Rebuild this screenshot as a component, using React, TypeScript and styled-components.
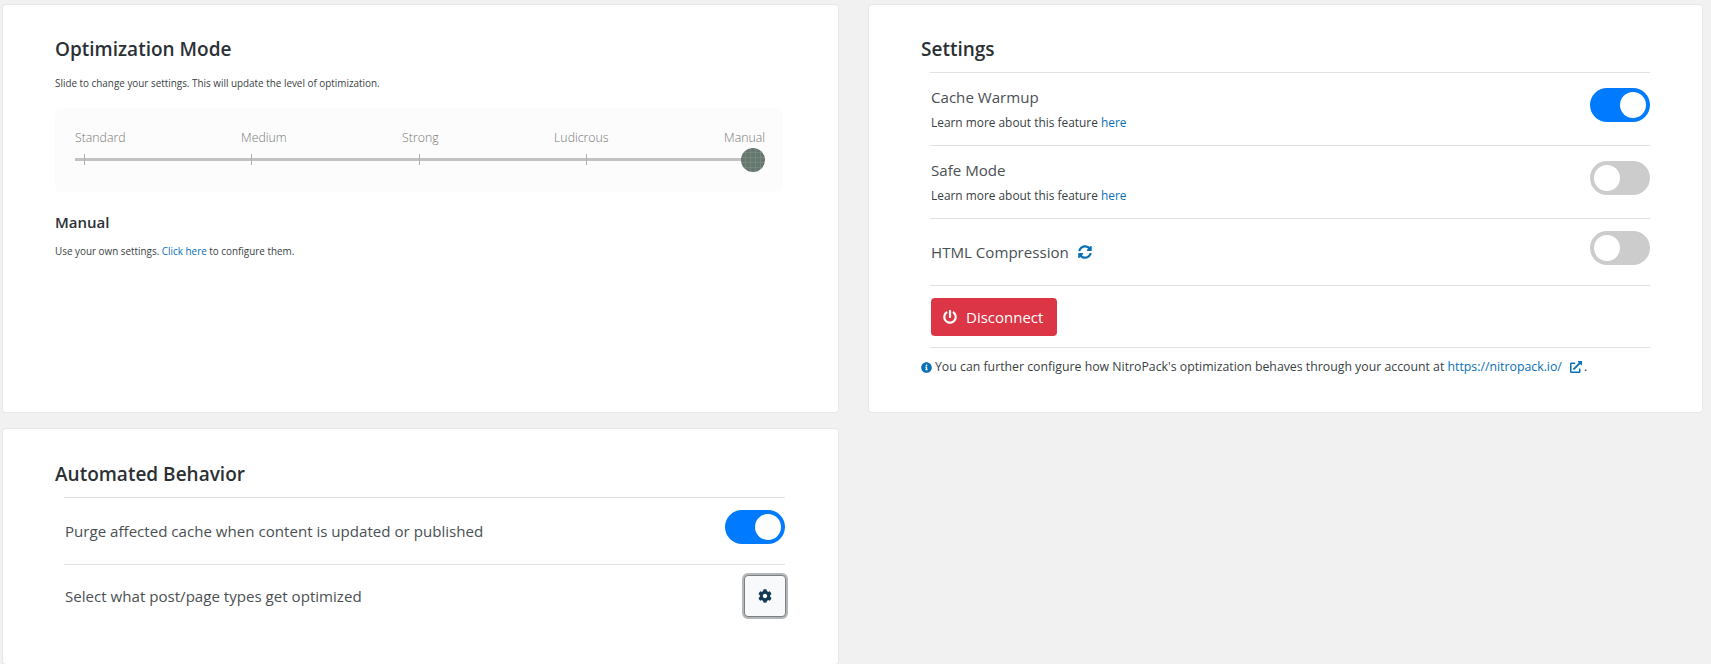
import React from "react";
import styled, { createGlobalStyle } from "styled-components";
import { FaPowerOff, FaSyncAlt, FaInfoCircle, FaCog, FaExternalLinkAlt } from "react-icons/fa";

const Global = createGlobalStyle`
  html, body { margin: 0; padding: 0; background: #f1f1f1; height: 664px; overflow: hidden; }
  * { box-sizing: border-box; }
  body { font-family: "Open Sans", "Noto Sans", sans-serif; color: #23282d; }
  a { color: #0a70b5; text-decoration: none; }
`;

const Page = styled.div`
  display: grid;
  grid-template-columns: 835px 833px;
  grid-template-rows: 407px 235px;
  column-gap: 31px;
  row-gap: 17px;
  padding: 5px 0 0 3px;
`;

const Card = styled.section<{ $pad?: string }>`
  background: #fff;
  border-radius: 3px;
  box-shadow: 0 0 2px rgba(0, 0, 0, 0.14);
  padding: ${(p) => p.$pad ?? "30px 52px 0"};
`;

const Title = styled.h2`
  margin: 0;
  font-size: 19px;
  line-height: 28px;
  font-weight: 600;
  color: #2b3035;
`;

const Small = styled.p<{ $mt: number }>`
  margin: ${(p) => p.$mt}px 0 0;
  font-size: 9.9px;
  line-height: 14px;
  color: #3a3f44;
`;

const SliderPanel = styled.div`
  margin: 18px 52px 0 0;
  width: 728px;
  height: 84px;
  padding: 21px 18px 0 20px;
  background: #fcfcfc;
  border-radius: 6px;
`;

const Labels = styled.div`
  display: flex;
  justify-content: space-between;
  font-size: 12.3px;
  font-weight: 300;
  line-height: 18px;
  color: #777;
`;

const Track = styled.div`
  position: relative;
  height: 24px;
  margin-top: 1px;
`;

const Line = styled.div`
  position: absolute;
  left: 0;
  right: 0;
  top: 10px;
  height: 3px;
  background: #c2c2c2;
`;

const Tick = styled.span<{ $x: number }>`
  position: absolute;
  left: ${(p) => p.$x}px;
  top: 6px;
  width: 1px;
  height: 11px;
  background: #b0b0b0;
`;

const Thumb = styled.span`
  position: absolute;
  right: 0;
  top: 0;
  width: 24px;
  height: 24px;
  border-radius: 50%;
  background-color: #66776f;
  background-image:
    repeating-linear-gradient(90deg, transparent 0 4px, rgba(130, 155, 140, 0.4) 4px 5px),
    repeating-linear-gradient(0deg, transparent 0 4px, rgba(130, 155, 140, 0.4) 4px 5px);
`;

const SubHeading = styled.h3`
  margin: 18px 0 0;
  font-size: 15px;
  line-height: 24px;
  font-weight: 600;
  color: #2b3035;
`;

const Rows = styled.div<{ $ml: number; $w: number }>`
  margin-left: ${(p) => p.$ml}px;
  width: ${(p) => p.$w}px;
`;

const Spacer = styled.div`
  height: 9px;
`;

const Row = styled.div<{ $h: number }>`
  display: flex;
  align-items: center;
  justify-content: space-between;
  height: ${(p) => p.$h}px;
  border-top: 1px solid #e2e2e2;
  padding-left: 1px;
`;

const RowText = styled.div`
  padding-bottom: 2px;
`;

const RowLabel = styled.div`
  font-size: 15.1px;
  line-height: 20px;
  color: #4a4f54;
  display: flex;
  align-items: center;
  gap: 9px;
`;

const RowSub = styled.div`
  margin-top: 8px;
  font-size: 11.9px;
  line-height: 15px;
  color: #3a3f44;
`;

const Toggle = styled.span<{ $on?: boolean }>`
  position: relative;
  flex: none;
  width: 60px;
  height: 34px;
  margin: 0 0 8px 0;
  border-radius: 17px;
  background: ${(p) => (p.$on ? "#007bff" : "#cccccc")};
  &::after {
    content: "";
    position: absolute;
    top: 4px;
    left: ${(p) => (p.$on ? "30px" : "4px")};
    width: 26px;
    height: 26px;
    border-radius: 50%;
    background: #fff;
  }
`;

const Danger = styled.button`
  display: inline-flex;
  align-items: center;
  gap: 9px;
  width: 126px;
  height: 38px;
  padding: 0 12px;
  border: 0;
  border-radius: 4px;
  background: #dc3545;
  color: #fff;
  font: 500 15px "Open Sans", sans-serif;
`;

const Note = styled.p`
  margin: 9px 0 0;
  font-size: 12.3px;
  line-height: 20px;
  color: #3a3f44;
  display: flex;
  align-items: center;
  white-space: pre;
`;

const InfoIcon = styled(FaInfoCircle)`
  color: #0a70b5;
  font-size: 11px;
  margin-right: 3px;
`;

const ExtIcon = styled(FaExternalLinkAlt)`
  color: #0a70b5;
  font-size: 12px;
  margin-left: 8px;
  margin-right: 2px;
`;

const SyncIcon = styled(FaSyncAlt)`
  color: #0a70b5;
  font-size: 14px;
`;

const GearButton = styled.button`
  width: 42px;
  height: 42px;
  margin-right: -1px;
  display: flex;
  align-items: center;
  justify-content: center;
  background: #f8f9fa;
  border: 1px solid #7c8084;
  border-radius: 4px;
  box-shadow: 0 0 0 2px #b4b6b8;
  color: #123a55;
  font-size: 14px;
  padding: 0;
`;

const BtnRow = styled.div`
  height: 63px;
  border-top: 1px solid #e2e2e2;
  border-bottom: 1px solid #e2e2e2;
  padding: 12px 0 0 1px;
`;

export default function App() {
  return (
    <>
      <Global />
      <Page>
        <Card>
          <Title>Optimization Mode</Title>
          <Small $mt={13}>Slide to change your settings. This will update the level of optimization.</Small>
          <SliderPanel>
            <Labels>
              <span>Standard</span>
              <span>Medium</span>
              <span>Strong</span>
              <span>Ludicrous</span>
              <span>Manual</span>
            </Labels>
            <Track>
              <Line />
              <Tick $x={9} />
              <Tick $x={176} />
              <Tick $x={344} />
              <Tick $x={511} />
              <Thumb />
            </Track>
          </SliderPanel>
          <SubHeading>Manual</SubHeading>
          <Small $mt={10}>
            Use your own settings. <a>Click here</a> to configure them.
          </Small>
        </Card>

        <Card>
          <Title>Settings</Title>
          <Rows $ml={9} $w={720}>
            <Spacer />
            <Row $h={73}>
              <RowText>
                <RowLabel>Cache Warmup</RowLabel>
                <RowSub>
                  Learn more about this feature <a>here</a>
                </RowSub>
              </RowText>
              <Toggle $on />
            </Row>
            <Row $h={73}>
              <RowText>
                <RowLabel>Safe Mode</RowLabel>
                <RowSub>
                  Learn more about this feature <a>here</a>
                </RowSub>
              </RowText>
              <Toggle />
            </Row>
            <Row $h={67}>
              <RowLabel>
                HTML Compression <SyncIcon />
              </RowLabel>
              <Toggle />
            </Row>
            <BtnRow>
              <Danger>
                <FaPowerOff size={14} />
                Disconnect
              </Danger>
            </BtnRow>
          </Rows>
          <Note>
            <InfoIcon />
            You can further configure how NitroPack's optimization behaves through your account at <a>https://nitropack.io/</a>
            <ExtIcon />.
          </Note>
        </Card>

        <Card $pad="31px 52px 0">
          <Title>Automated Behavior</Title>
          <Rows $ml={9} $w={721}>
            <Spacer />
            <Row $h={67}>
              <RowLabel>Purge affected cache when content is updated or published</RowLabel>
              <Toggle $on />
            </Row>
            <Row $h={63}>
              <RowLabel>Select what post/page types get optimized</RowLabel>
              <GearButton>
                <FaCog />
              </GearButton>
            </Row>
          </Rows>
        </Card>
      </Page>
    </>
  );
}
